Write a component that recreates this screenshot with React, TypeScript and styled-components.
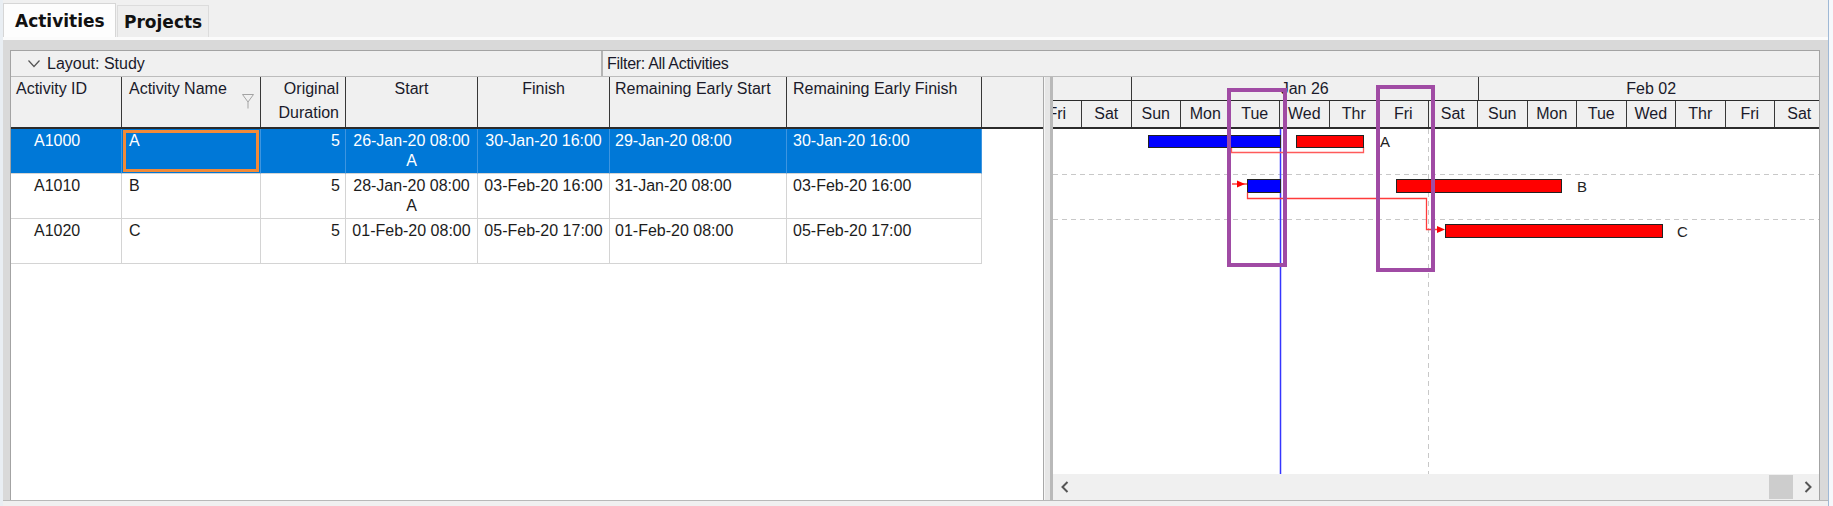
import React from 'react';
import styled, { createGlobalStyle } from 'styled-components';

type Align = 'left' | 'center' | 'right';

interface Activity {
  id: string;
  name: string;
  dur: string;
  start: string;
  startFlag?: string;
  finish: string;
  res: string;
  ref: string;
  selected?: boolean;
}

interface Column {
  key: keyof Activity;
  title: string[];
  width: number;
  headAlign: Align;
  headPad: number;
  align: Align;
  pad: number;
  sort?: boolean;
}

// 列の定義（幅は右ボーダー込み）
const columns: Column[] = [
  { key: 'id', title: ['Activity ID'], width: 111, headAlign: 'left', headPad: 5, align: 'left', pad: 23 },
  { key: 'name', title: ['Activity Name'], width: 139, headAlign: 'left', headPad: 7, align: 'left', pad: 7, sort: true },
  { key: 'dur', title: ['Original', 'Duration'], width: 85, headAlign: 'right', headPad: 6, align: 'right', pad: 5 },
  { key: 'start', title: ['Start'], width: 132, headAlign: 'center', headPad: 0, align: 'center', pad: 0 },
  { key: 'finish', title: ['Finish'], width: 132, headAlign: 'center', headPad: 0, align: 'center', pad: 0 },
  { key: 'res', title: ['Remaining Early Start'], width: 177, headAlign: 'left', headPad: 5, align: 'left', pad: 5 },
  { key: 'ref', title: ['Remaining Early Finish'], width: 195, headAlign: 'left', headPad: 6, align: 'left', pad: 6 },
];

const activities: Activity[] = [
  { id: 'A1000', name: 'A', dur: '5', start: '26-Jan-20 08:00', startFlag: 'A', finish: '30-Jan-20 16:00', res: '29-Jan-20 08:00', ref: '30-Jan-20 16:00', selected: true },
  { id: 'A1010', name: 'B', dur: '5', start: '28-Jan-20 08:00', startFlag: 'A', finish: '03-Feb-20 16:00', res: '31-Jan-20 08:00', ref: '03-Feb-20 16:00' },
  { id: 'A1020', name: 'C', dur: '5', start: '01-Feb-20 08:00', finish: '05-Feb-20 17:00', res: '01-Feb-20 08:00', ref: '05-Feb-20 17:00' },
];

const months = ['', 'Jan 26', 'Feb 02'];
const days = ['Fri', 'Sat', 'Sun', 'Mon', 'Tue', 'Wed', 'Thr', 'Fri', 'Sat', 'Sun', 'Mon', 'Tue', 'Wed', 'Thr', 'Fri', 'Sat'];

// 赤紫の注釈枠
const marks = [
  { x: 1227, y: 88, w: 60, h: 179 },
  { x: 1376, y: 85, w: 59, h: 187 },
];

export default function App() {
  return (
    <>
      <GlobalStyle />
      <Window>
        <LeftEdge />
        <Main>
          <TabBar>
            <Tab $active>Activities</Tab>
            <Tab>Projects</Tab>
          </TabBar>
          <Content>
            <Panel>
              <LayoutBar>
                <LayoutCell>
                  <svg width="12" height="8" viewBox="0 0 12 8">
                    <polyline points="0.5,0.5 6,6.5 11.5,0.5" fill="none" stroke="#555" strokeWidth="1.2" />
                  </svg>
                  <span>Layout: Study</span>
                </LayoutCell>
                <FilterCell>Filter: All Activities</FilterCell>
              </LayoutBar>
              <Body>
                <LeftPane>
                  <HeadRow>
                    {columns.map((c) => (
                      <HeadCell key={c.key} $w={c.width} $align={c.headAlign} $pad={c.headPad}>
                        {c.title.map((t) => (
                          <div key={t}>{t}</div>
                        ))}
                        {c.sort && (
                          <SortIcon width="12" height="15" viewBox="0 0 12 15">
                            <polyline points="0.5,0.5 11.5,0.5 6,8 6,14.5" fill="none" stroke="#a3a3a3" strokeWidth="1" />
                            <line x1="0.5" y1="0.5" x2="6" y2="8" stroke="#a3a3a3" strokeWidth="1" />
                          </SortIcon>
                        )}
                      </HeadCell>
                    ))}
                    <HeadFill />
                  </HeadRow>
                  {activities.map((a) => (
                    <Row key={a.id} $selected={a.selected}>
                      {columns.map((c) => (
                        <Cell
                          key={c.key}
                          $w={c.width}
                          $align={c.align}
                          $pad={c.pad}
                          $selected={a.selected}
                          $focused={a.selected && c.key === 'name'}
                        >
                          {a[c.key] as string}
                          {c.key === 'start' && a.startFlag && <div>{a.startFlag}</div>}
                        </Cell>
                      ))}
                    </Row>
                  ))}
                </LeftPane>
                <Splitter />
                <GanttPane>
                  <GanttHead>
                    <MonthTrack>
                      {months.map((m, i) => (
                        <MonthCell key={i}>{m}</MonthCell>
                      ))}
                    </MonthTrack>
                    <DayTrack>
                      {days.map((d, i) => (
                        <DayCell key={i}>{d}</DayCell>
                      ))}
                    </DayTrack>
                  </GanttHead>
                  <GanttBody>
                    <GanttChart />
                  </GanttBody>
                  <HScroll>
                    <ScrollBtn>
                      <svg width="8" height="12" viewBox="0 0 8 12">
                        <polyline points="6.5,1 1.5,6 6.5,11" fill="none" stroke="#555" strokeWidth="2" />
                      </svg>
                    </ScrollBtn>
                    <ScrollTrack>
                      <Thumb />
                    </ScrollTrack>
                    <ScrollBtn>
                      <svg width="8" height="12" viewBox="0 0 8 12">
                        <polyline points="1.5,1 6.5,6 1.5,11" fill="none" stroke="#555" strokeWidth="2" />
                      </svg>
                    </ScrollBtn>
                  </HScroll>
                </GanttPane>
              </Body>
            </Panel>
          </Content>
          <Footer />
        </Main>
        <RightEdge />
        {marks.map((m, i) => (
          <Mark key={i} $x={m.x} $y={m.y} $w={m.w} $h={m.h} />
        ))}
      </Window>
    </>
  );
}

const GanttChart = () => (
  <svg width="766" height="345" viewBox="0 0 766 345">
    <g stroke="#c8c8c8" strokeWidth="1" strokeDasharray="5 4">
      <line x1="0" y1="45.5" x2="766" y2="45.5" />
      <line x1="0" y1="90.5" x2="766" y2="90.5" />
      <line x1="375.5" y1="0" x2="375.5" y2="345" />
    </g>
    <line x1="227.5" y1="0" x2="227.5" y2="345" stroke="#3535ff" strokeWidth="1.5" />

    {/* A */}
    <path d="M178.5,18 V23.5 H310.5 V18" fill="none" stroke="#ff5a5a" strokeWidth="1.3" />
    <rect x="95.5" y="6.5" width="132" height="12" fill="#0000ff" stroke="#222" />
    <rect x="243.5" y="6.5" width="67" height="12" fill="#ff0000" stroke="#222" />
    <ChartLabel x="327" y="17.5">A</ChartLabel>

    {/* B */}
    <line x1="179" y1="55" x2="194" y2="55" stroke="#ff2020" strokeWidth="1.3" />
    <polygon points="184,51.5 192,55 184,58.5" fill="#ff0000" />
    <rect x="194.5" y="50.5" width="33" height="13" fill="#0000ff" stroke="#222" />
    <rect x="343.5" y="50.5" width="165" height="13" fill="#ff0000" stroke="#222" />
    <ChartLabel x="524" y="62.5">B</ChartLabel>

    {/* B → C */}
    <path d="M194.5,63.5 V69.5 H373.5 V100.5 H386" fill="none" stroke="#ff3b3b" strokeWidth="1.3" />
    <polygon points="384,97 392,100.5 384,104" fill="#ff0000" />

    {/* C */}
    <rect x="392.5" y="95.5" width="217" height="13" fill="#ff0000" stroke="#222" />
    <ChartLabel x="624" y="107.5">C</ChartLabel>
  </svg>
);

const GlobalStyle = createGlobalStyle`
  html, body {
    margin: 0;
    padding: 0;
    background: #f0f0f0;
  }
  body {
    font-family: "Liberation Sans", Arial, sans-serif;
    font-size: 16px;
    color: #1c1c1c;
  }
  * {
    box-sizing: border-box;
  }
`;

const Window = styled.div`
  position: relative;
  width: 1833px;
  height: 506px;
  display: flex;
  overflow: hidden;
`;

const LeftEdge = styled.div`
  width: 3px;
  background: #e9eef3;
`;

const RightEdge = styled.div`
  width: 5px;
  border-left: 1px solid #9fb9d6;
  background: #f6f8fb;
`;

const Main = styled.div`
  flex: 1;
  display: flex;
  flex-direction: column;
  min-width: 0;
`;

const TabBar = styled.div`
  height: 40px;
  display: flex;
  align-items: flex-end;
  background: #f0f0f0;
  border-bottom: 3px solid #fbfbfb;
`;

const Tab = styled.div<{ $active?: boolean }>`
  height: ${(p) => (p.$active ? 34 : 32)}px;
  width: ${(p) => (p.$active ? 113 : 92)}px;
  padding-left: ${(p) => (p.$active ? 11 : 6)}px;
  margin-left: ${(p) => (p.$active ? 0 : 1)}px;
  display: flex;
  align-items: center;
  background: ${(p) => (p.$active ? '#fdfdfd' : '#eeeeee')};
  border: 1px solid ${(p) => (p.$active ? '#d6d6d6' : '#dcdcdc')};
  border-bottom: none;
  font-family: "DejaVu Sans", "Liberation Sans", sans-serif;
  font-weight: bold;
  font-size: 17px;
  color: #111;
`;

const Content = styled.div`
  height: 460px;
  background: #d9d9d9;
  padding: 10px 8px 0 7px;
`;

const Footer = styled.div`
  flex: 1;
  background: #f0f0f0;
  border-top: 1px solid #b8b8b8;
`;

const Panel = styled.div`
  height: 100%;
  display: flex;
  flex-direction: column;
  border: 1px solid #a3a3a3;
  border-bottom: none;
  background: #fff;
`;

const LayoutBar = styled.div`
  height: 26px;
  display: flex;
  background: #f0f0f0;
  border-bottom: 1px solid #bcbcbc;
`;

const LayoutCell = styled.div`
  width: 592px;
  display: flex;
  align-items: center;
  gap: 7px;
  padding-left: 17px;
  border-right: 2px solid #b4b4b4;
  color: #1a1a2a;
`;

const FilterCell = styled.div`
  flex: 1;
  display: flex;
  align-items: center;
  padding-left: 4px;
  letter-spacing: -0.3px;
  color: #1a1a2a;
`;

const Body = styled.div`
  flex: 1;
  display: flex;
  min-height: 0;
`;

const LeftPane = styled.div`
  width: 1033px;
  display: flex;
  flex-direction: column;
  background: #fff;
  border-right: 1px solid #a8a8a8;
`;

const HeadRow = styled.div`
  height: 52px;
  flex-shrink: 0;
  display: flex;
  background: #f0f0f0;
  border-bottom: 2px solid #2b2b2b;
`;

const HeadCell = styled.div<{ $w: number; $align: Align; $pad: number }>`
  position: relative;
  flex: 0 0 ${(p) => p.$w}px;
  padding: 0 ${(p) => p.$pad}px;
  text-align: ${(p) => p.$align};
  line-height: 24px;
  white-space: nowrap;
  border-right: 1px solid #383838;
  color: #1a1a2a;
`;

const HeadFill = styled.div`
  flex: 1;
`;

const SortIcon = styled.svg`
  position: absolute;
  right: 6px;
  bottom: 18px;
`;

const Row = styled.div<{ $selected?: boolean }>`
  height: 45px;
  flex-shrink: 0;
  display: flex;
  background: ${(p) => (p.$selected ? '#0078d7' : '#fff')};
  color: ${(p) => (p.$selected ? '#fff' : '#1c1c1c')};
  align-self: flex-start;
`;

const Cell = styled.div<{ $w: number; $align: Align; $pad: number; $selected?: boolean; $focused?: boolean }>`
  flex: 0 0 ${(p) => p.$w}px;
  padding: 2px ${(p) => p.$pad}px 0;
  text-align: ${(p) => p.$align};
  line-height: 20px;
  white-space: nowrap;
  border-right: 1px solid ${(p) => (p.$selected ? '#3d95e0' : '#d4d4d4')};
  border-bottom: 1px solid #d4d4d4;
  box-shadow: ${(p) => (p.$focused ? 'inset 0 0 0 1px #0078d7, inset 0 0 0 4px #f28a38' : 'none')};
`;

const Splitter = styled.div`
  width: 9px;
  background: #e6e6e6;
  border-left: 1px solid #f6f6f6;
  border-right: 3px solid #b9b9b9;
`;

const GanttPane = styled.div`
  flex: 1;
  min-width: 0;
  display: flex;
  flex-direction: column;
  overflow: hidden;
`;

const GanttHead = styled.div`
  height: 52px;
  flex-shrink: 0;
  background: #f0f0f0;
  overflow: hidden;
  border-bottom: 2px solid #2b2b2b;
`;

const MonthTrack = styled.div`
  height: 24px;
  display: flex;
  margin-left: -267.5px;
  border-bottom: 1px solid #2b2b2b;
`;

const MonthCell = styled.div`
  flex: 0 0 346.5px;
  text-align: center;
  line-height: 24px;
  border-right: 1px solid #383838;
  color: #1a1a2a;
`;

const DayTrack = styled.div`
  height: 26px;
  display: flex;
  margin-left: -20.5px;
`;

const DayCell = styled.div`
  flex: 0 0 49.5px;
  text-align: center;
  line-height: 26px;
  border-right: 1px solid #383838;
  color: #1a1a2a;
`;

const GanttBody = styled.div`
  height: 345px;
  flex-shrink: 0;
  background: #fff;
  svg {
    display: block;
  }
`;

const ChartLabel = styled.text`
  font-family: "Liberation Sans", Arial, sans-serif;
  font-size: 15px;
  fill: #222;
`;

const HScroll = styled.div`
  flex: 1;
  display: flex;
  background: #f0f0f0;
`;

const ScrollBtn = styled.div`
  width: 23px;
  display: flex;
  align-items: center;
  justify-content: center;
`;

const ScrollTrack = styled.div`
  flex: 1;
  display: flex;
  justify-content: flex-end;
  padding: 1px 3px 1px 0;
`;

const Thumb = styled.div`
  width: 24px;
  background: #cdcdcd;
`;

const Mark = styled.div<{ $x: number; $y: number; $w: number; $h: number }>`
  position: absolute;
  left: ${(p) => p.$x}px;
  top: ${(p) => p.$y}px;
  width: ${(p) => p.$w}px;
  height: ${(p) => p.$h}px;
  border: 4px solid #a04ba4;
  pointer-events: none;
`;
